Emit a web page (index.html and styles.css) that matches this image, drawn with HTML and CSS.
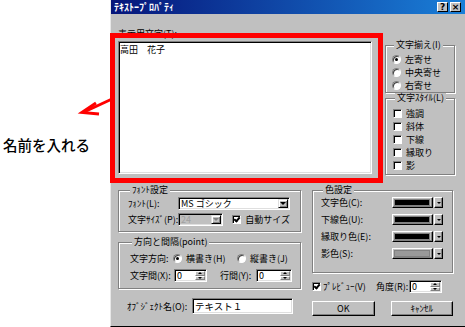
FILE: index.html
```html
<!DOCTYPE html>
<html lang="ja">
<head>
    <meta charset="UTF-8">
    <title>テキストプロパティ</title>
    <link rel="stylesheet" href="styles.css">
</head>
<body>
    <div class="note">
        <svg class="note-arrow" width="110" height="30" viewBox="0 0 110 30">
            <path d="M112 11 L84 24" stroke="#f00" stroke-width="3" fill="none"/>
            <path d="M96 15 L82 24.5 L99 26" stroke="#f00" stroke-width="3" fill="none" stroke-linejoin="miter"/>
        </svg>
        <p class="note-text">名前を入れる</p>
    </div>

    <div class="dialog">
        <div class="titlebar">
            <span class="title">ﾃｷｽﾄｰﾌﾟﾛﾊﾟﾃｨ</span>
            <span class="tb-btn help">?</span>
            <span class="tb-btn">×</span>
        </div>

        <div class="content">
            <div class="top">
                <div class="text-col">
                    <div class="label">表示用文字(T):</div>
                    <div class="textbox">高田　花子</div>
                </div>
                <div class="side-col">
                    <fieldset class="group align-group">
                        <legend>文字揃え(I)</legend>
                        <div class="opt"><span class="radio on"></span>左寄せ</div>
                        <div class="opt"><span class="radio"></span>中央寄せ</div>
                        <div class="opt"><span class="radio"></span>右寄せ</div>
                    </fieldset>
                    <fieldset class="group style-group">
                        <legend>文字ｽﾀｲﾙ(L)</legend>
                        <div class="opt"><span class="check"></span>強調</div>
                        <div class="opt"><span class="check"></span>斜体</div>
                        <div class="opt"><span class="check"></span>下線</div>
                        <div class="opt"><span class="check"></span>縁取り</div>
                        <div class="opt"><span class="check"></span>影</div>
                    </fieldset>
                </div>
            </div>

            <div class="bottom">
                <div class="left-col">
                    <fieldset class="group font-group">
                        <legend>ﾌｫﾝﾄ設定</legend>
                        <div class="row">
                            <span class="row-label">ﾌｫﾝﾄ(L):</span>
                            <span class="field select"><span class="value">MS ゴシック</span><span class="drop"></span></span>
                        </div>
                        <div class="row">
                            <span class="row-label">文字ｻｲｽﾞ(P):</span>
                            <span class="field size disabled"><span class="value">24</span><span class="drop"></span></span>
                            <span class="check on"></span>
                            <span class="auto-label">自動サイズ</span>
                        </div>
                    </fieldset>

                    <fieldset class="group dir-group">
                        <legend>方向と間隔(point)</legend>
                        <div class="row">
                            <span class="dir-label">文字方向:</span>
                            <span class="radio on"></span>
                            <span class="dir-opt">横書き(H)</span>
                            <span class="radio"></span>
                            <span>縦書き(J)</span>
                        </div>
                        <div class="row spacing-row">
                            <span class="dir-label">文字間(X):</span>
                            <span class="field spin char-spin"><span class="value">0</span><span class="spinner"><i class="up"></i><i class="down"></i></span></span>
                            <span class="line-label">行間(Y):</span>
                            <span class="field spin line-spin"><span class="value">0</span><span class="spinner"><i class="up"></i><i class="down"></i></span></span>
                        </div>
                    </fieldset>

                    <div class="name-row">
                        <span class="name-label">ｵﾌﾞｼﾞｪｸﾄ名(O):</span>
                        <span class="field name-field"><span class="value">テキスト１</span></span>
                    </div>
                </div>

                <div class="right-col">
                    <fieldset class="group color-group">
                        <legend>色設定</legend>
                        <div class="color-row">
                            <span class="color-label">文字色(C):</span>
                            <span class="swatch"><span class="chip"></span></span><span class="swatch-drop"></span>
                        </div>
                        <div class="color-row">
                            <span class="color-label">下線色(U):</span>
                            <span class="swatch"><span class="chip"></span></span><span class="swatch-drop"></span>
                        </div>
                        <div class="color-row">
                            <span class="color-label">縁取り色(E):</span>
                            <span class="swatch"><span class="chip"></span></span><span class="swatch-drop"></span>
                        </div>
                        <div class="color-row">
                            <span class="color-label">影色(S):</span>
                            <span class="swatch"><span class="chip gray"></span></span><span class="swatch-drop"></span>
                        </div>
                    </fieldset>

                    <div class="preview-row">
                        <span class="check on"></span>
                        <span class="preview-label">ﾌﾟﾚﾋﾞｭｰ(V)</span>
                        <span class="angle-label">角度(R):</span>
                        <span class="field spin angle-spin"><span class="value">0</span><span class="spinner"><i class="up"></i><i class="down"></i></span></span>
                    </div>

                    <div class="buttons">
                        <span class="btn">OK</span>
                        <span class="btn">ｷｬﾝｾﾙ</span>
                    </div>
                </div>
            </div>
        </div>
    </div>
</body>
</html>
```

FILE: styles.css
```css
body {
    margin: 0;
    width: 465px;
    height: 327px;
    overflow: hidden;
    display: flex;
    background: #fff;
    font-family: "Noto Sans CJK JP", sans-serif;
    font-size: 9px;
    color: #000;
}

/* annotation on the left */
.note {
    width: 110px;
    flex: none;
}

.note-arrow {
    display: block;
    margin-top: 88px;
    overflow: visible;
}

.note-text {
    margin: 18px 0 0 3px;
    font-size: 14.5px;
    line-height: 18px;
    font-weight: 500;
    white-space: nowrap;
}

/* dialog window */
.dialog {
    flex: none;
    width: 354px;
    height: 326px;
    background: #c0c0c0;
    border-left: 1px solid #e8e8e8;
    border-bottom: 1px solid #000;
}

.titlebar {
    height: 14px;
    display: flex;
    align-items: center;
    padding: 0 4px 0 3px;
    background: linear-gradient(to right, #06157a, #1a7fd8);
}

.title {
    color: #fff;
    font-weight: 700;
    font-size: 10px;
    line-height: 14px;
    flex: 1;
}

.tb-btn {
    width: 11px;
    height: 10px;
    box-sizing: border-box;
    background: #c0c0c0;
    border: 1px solid;
    border-color: #fff #000 #000 #fff;
    font: 700 9px/8px "DejaVu Sans", sans-serif;
    text-align: center;
}

.tb-btn.help {
    margin-right: 2px;
}

.content {
    padding: 13px 10px 0 7px;
}

/* top: text area + alignment / style boxes */
.top {
    display: flex;
    gap: 7px;
}

.text-col {
    width: 260px;
}

.label {
    height: 14px;
    line-height: 13px;
}

.textbox {
    position: relative;
    width: 254px;
    height: 133px;
    box-sizing: border-box;
    background: #fff;
    border: 1px solid;
    border-color: #808080 #fff #fff #808080;
    box-shadow: inset 1px 1px #000, inset -1px -1px #dfdfdf;
    padding: 2px 1px;
    line-height: 12px;
}

/* red highlight drawn over the dialog */
.textbox::after {
    content: "";
    position: absolute;
    left: -9px;
    top: -9px;
    right: -12px;
    bottom: -10px;
    border: 5px solid #f00;
}

.side-col {
    width: 70px;
    padding-top: 13px;
}

.group {
    margin: 0;
    min-width: 0;
    border: 1px solid #808080;
    box-shadow: inset 1px 1px #fff, 1px 1px #fff;
}

.group legend {
    padding: 0 2px;
    margin-left: 2px;
    height: 10px;
    line-height: 10px;
    background: #c0c0c0;
}

.align-group {
    padding: 3px 0 1px 6px;
}

.style-group {
    padding: 4px 0 3px 7px;
}

.opt {
    height: 12px;
    display: flex;
    align-items: center;
    margin-bottom: 1px;
    white-space: nowrap;
}

.opt:last-child {
    margin-bottom: 0;
}

.radio {
    width: 9px;
    height: 9px;
    box-sizing: border-box;
    flex: none;
    border-radius: 50%;
    background: #fff;
    border: 1px solid;
    border-color: #808080 #fff #fff #808080;
    box-shadow: inset 1px 1px #404040;
    position: relative;
    margin-right: 4px;
}

.radio.on::after {
    content: "";
    position: absolute;
    left: 2px;
    top: 2px;
    width: 3px;
    height: 3px;
    border-radius: 50%;
    background: #000;
}

.check {
    width: 9px;
    height: 9px;
    box-sizing: border-box;
    flex: none;
    background: #fff;
    border: 1px solid;
    border-color: #808080 #fff #fff #808080;
    box-shadow: inset 1px 1px #000;
    position: relative;
    margin-right: 4px;
}

.check.on::after {
    content: "";
    position: absolute;
    left: 2px;
    top: 0px;
    width: 2px;
    height: 4px;
    border: solid #000;
    border-width: 0 2px 2px 0;
    transform: rotate(40deg);
}

/* bottom area */
.bottom {
    display: flex;
    gap: 11px;
    margin-top: 10px;
}

.left-col {
    width: 183px;
}

.right-col {
    width: 141px;
}

.row {
    display: flex;
    align-items: center;
    white-space: nowrap;
}

.field {
    display: flex;
    align-items: center;
    box-sizing: border-box;
    background: #fff;
    border: 1px solid;
    border-color: #808080 #fff #fff #808080;
    box-shadow: inset 1px 1px #000, inset -1px -1px #dfdfdf;
    line-height: 11px;
}

.field .value {
    flex: 1;
    padding-left: 2px;
    white-space: nowrap;
    overflow: hidden;
}

.drop {
    width: 10px;
    align-self: stretch;
    margin: 1px;
    box-sizing: border-box;
    background: #c0c0c0;
    border: 1px solid;
    border-color: #dfdfdf #000 #000 #dfdfdf;
    box-shadow: inset 1px 1px #fff, inset -1px -1px #808080;
    display: flex;
    align-items: center;
    justify-content: center;
}

.drop::before {
    content: "";
    border-left: 3px solid transparent;
    border-right: 3px solid transparent;
    border-top: 3px solid #000;
}

.font-group {
    padding: 2px 10px 5px 9px;
}

.font-group .row {
    height: 13px;
}

.font-group .row + .row {
    margin-top: 3px;
}

.row-label {
    width: 50px;
}

.select {
    width: 112px;
    height: 13px;
}

.size {
    width: 51px;
    height: 13px;
    margin-right: 9px;
}

.size.disabled {
    background: #c0c0c0;
    color: #a0a0a0;
}

.size.disabled .drop::before {
    border-top-color: #808080;
}

.dir-group {
    margin-top: 5px;
    padding: 5px 0 6px 11px;
}

.dir-group .row {
    height: 12px;
}

.dir-group .spacing-row {
    height: 13px;
    margin-top: 5px;
}

.dir-label {
    width: 43px;
}

.dir-opt {
    width: 51px;
}

.spin {
    height: 13px;
}

.char-spin {
    width: 33px;
    margin-left: 1px;
}

.line-label {
    margin-left: 13px;
    width: 36px;
}

.line-spin {
    width: 36px;
}

.spinner {
    width: 10px;
    align-self: stretch;
    margin: 1px;
    display: flex;
    flex-direction: column;
}

.spinner i {
    flex: 1;
    box-sizing: border-box;
    background: #c0c0c0;
    border: 1px solid;
    border-color: #fff #808080 #808080 #fff;
    display: flex;
    align-items: center;
    justify-content: center;
}

.spinner .up::before {
    content: "";
    border-left: 2px solid transparent;
    border-right: 2px solid transparent;
    border-bottom: 2px solid #000;
}

.spinner .down::before {
    content: "";
    border-left: 2px solid transparent;
    border-right: 2px solid transparent;
    border-top: 2px solid #000;
}

.name-row {
    display: flex;
    align-items: center;
    height: 16px;
    margin-top: 9px;
    padding-left: 9px;
    white-space: nowrap;
}

.name-label {
    width: 65px;
}

.name-field {
    width: 101px;
    height: 16px;
    font-size: 9.5px;
    line-height: 14px;
}

/* colour box */
.color-group {
    padding: 1px 9px 12px 8px;
}

.color-row {
    height: 13px;
    display: flex;
    align-items: center;
    white-space: nowrap;
}

.color-row + .color-row {
    margin-top: 4px;
}

.color-label {
    width: 71px;
}

.swatch {
    width: 41px;
    height: 11px;
    box-sizing: border-box;
    background: #c0c0c0;
    border: 1px solid;
    border-color: #fff #000 #000 #fff;
    box-shadow: inset -1px -1px #808080;
    padding: 2px 3px 2px 2px;
    display: flex;
}

.chip {
    flex: 1;
    background: #000;
    box-shadow: 0 0 0 1px #808080;
}

.chip.gray {
    background: #999;
}

.swatch-drop {
    width: 9px;
    height: 11px;
    margin-left: 1px;
    box-sizing: border-box;
    background: #c0c0c0;
    border: 1px solid;
    border-color: #fff #000 #000 #fff;
    box-shadow: inset -1px -1px #808080;
    display: flex;
    align-items: center;
    justify-content: center;
}

.swatch-drop::before {
    content: "";
    border-left: 2px solid transparent;
    border-right: 2px solid transparent;
    border-top: 2px solid #000;
}

.preview-row {
    display: flex;
    align-items: center;
    height: 13px;
    margin-top: 7px;
    white-space: nowrap;
}

.preview-label {
    width: 53px;
    margin-left: -2px;
}

.angle-label {
    width: 33px;
}

.angle-spin {
    width: 33px;
}

.buttons {
    display: flex;
    gap: 16px;
    margin-top: 8px;
}

.btn {
    width: 63px;
    height: 15px;
    box-sizing: border-box;
    background: #c0c0c0;
    border: 1px solid;
    border-color: #fff #000 #000 #fff;
    box-shadow: inset -1px -1px #808080;
    text-align: center;
    line-height: 13px;
}
```
